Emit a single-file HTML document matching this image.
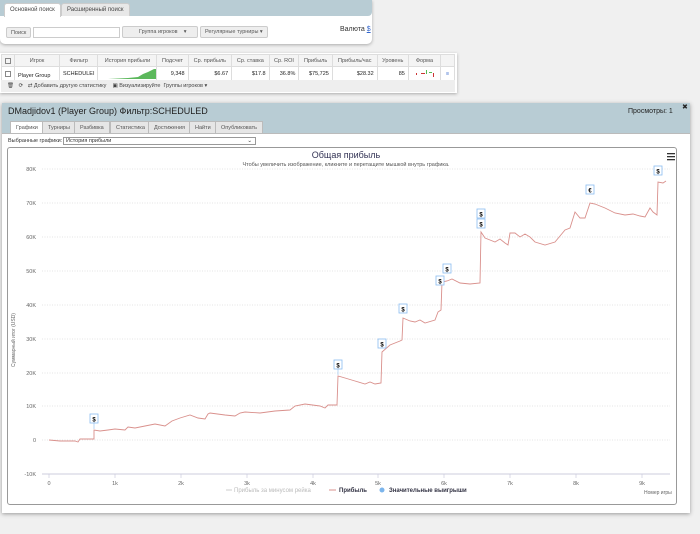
<!DOCTYPE html>
<html><head><meta charset="utf-8"><style>
*{box-sizing:border-box;margin:0;padding:0}
body{width:700px;height:534px;background:#f0f0f0;font-family:"Liberation Sans","DejaVu Sans",sans-serif;position:relative;overflow:hidden;font-size:6px;color:#333}
.abs{position:absolute}
.tab{position:absolute;top:3px;height:13px;border:1px solid #ccc;border-bottom:none;background:#e8e8e8;font-size:6px;padding:3px 5px;color:#444;border-radius:3px 3px 0 0}
.btn{position:absolute;height:11px;border:1px solid #ccc;background:#eee;font-size:5.5px;color:#555;padding:2px 4px;border-radius:2px}
table{border-collapse:collapse}
td{border:1px solid #ddd;font-size:5.5px;height:12px;padding:0 3px;white-space:nowrap}
.h td{background:#f4f4f4;color:#555;text-align:center}
.r td{text-align:right;color:#222}
.t2{position:absolute;top:121px;height:12px;border:1px solid #bbb;border-bottom:none;background:#e6e6e6;font-size:5.5px;padding:3px 5px;color:#555}
</style></head><body>
<!-- search panel -->
<div class="abs" style="left:0;top:0;width:372px;height:44px;background:#fff;border-radius:0 0 5px 5px;box-shadow:0 1px 3px #aaa"></div>
<div class="abs" style="left:0;top:0;width:372px;height:16px;background:#b8ccd4;border-radius:0 0 4px 0"></div>
<div class="tab" style="left:4px;background:#fff;height:14px">Основной поиск</div>
<div class="tab" style="left:61px">Расширенный поиск</div>
<div class="btn" style="left:6px;top:27px">Поиск</div>
<div class="abs" style="left:33px;top:27px;width:87px;height:11px;border:1px solid #ccc;background:#fff"></div>
<div class="btn" style="left:122px;top:26px;width:76px;height:12px;padding-left:16px">Группа игроков &nbsp;&nbsp;&nbsp;▾</div>
<div class="btn" style="left:200px;top:26px;height:12px">Регулярные турниры ▾</div>
<div class="abs" style="left:340px;top:26px;font-size:7px;color:#333">Валюта <span style="color:#36c;text-decoration:underline">$</span></div>
<!-- stats table -->
<div class="abs" style="left:0;top:53px;width:457px;height:40px;background:#fff;box-shadow:0 1px 3px #aaa"></div>
<table class="abs" style="left:1px;top:54px;width:454px">
<tr class="h"><td style="width:8px"><div style="width:6px;height:6px;border:1px solid #888"></div></td><td style="width:45px">Игрок</td><td style="width:32px">Фильтр</td><td style="width:58px">История прибыли</td><td>Подсчет</td><td>Ср. прибыль</td><td>Ср. ставка</td><td>Ср. ROI</td><td>Прибыль</td><td>Прибыль/час</td><td>Уровень</td><td>Форма</td><td style="width:14px"></td></tr>
<tr class="r"><td><div style="width:6px;height:6px;border:1px solid #888"></div></td><td style="text-align:left;padding-top:4px">Player Group</td><td style="text-align:left">SCHEDULEI</td><td style="padding:0"><svg width="58" height="12"><path d="M10 12 L30 11 L40 10 L45 7 L50 5 L56 2 L58 2 L58 12Z" fill="#5cb85c"/></svg></td><td>9,348</td><td>$6.67</td><td>$17.8</td><td>36.8%</td><td>$75,725</td><td>$28.32</td><td>85</td><td style="padding:0"><svg width="28" height="12"><rect x="4" y="6" width="1" height="2" fill="#c33"/><rect x="9" y="6" width="4" height="1" fill="#c33"/><rect x="14" y="3" width="1" height="4" fill="#5b5"/><rect x="17" y="5" width="3" height="1" fill="#5b5"/><rect x="21" y="6" width="1" height="4" fill="#c33"/></svg></td><td style="color:#36c;text-align:center">≡</td></tr>
</table>
<div class="abs" style="left:1px;top:80px;width:454px;height:12px;background:#eee;font-size:5.5px;color:#444;padding:3px 6px">🗑 &nbsp; ⟳ &nbsp; ⇄ Добавить другую статистику &nbsp;&nbsp; ▣ Визуализируйте &nbsp;Группы игроков ▾</div>
<!-- main panel -->
<div class="abs" style="left:2px;top:103px;width:688px;height:410px;background:#fff;box-shadow:0 1px 4px #999"></div>
<div class="abs" style="left:2px;top:103px;width:688px;height:30px;background:#b8ccd4"></div>
<div class="abs" style="left:8px;top:106px;font-size:9px;color:#222">DMadjidov1 (Player Group) Фильтр:SCHEDULED</div>
<div class="abs" style="left:628px;top:108px;font-size:7px;color:#222">Просмотры: 1</div>
<div class="abs" style="left:682px;top:103px;font-size:7px;color:#222">✖</div>
<div class="t2" style="left:10px;background:#fff;height:13px">Графики</div>
<div class="t2" style="left:42px">Турниры</div>
<div class="t2" style="left:74px">Разбивка</div>
<div class="t2" style="left:110px">Статистика</div>
<div class="t2" style="left:148px">Достижения</div>
<div class="t2" style="left:189px">Найти</div>
<div class="t2" style="left:215px">Опубликовать</div>
<div class="abs" style="left:2px;top:133px;width:688px;height:1px;background:#bbb"></div>
<div class="abs" style="left:8px;top:138px;font-size:5.5px;color:#333">Выбранные графики:</div>
<div class="abs" style="left:63px;top:137px;width:193px;height:8px;border:1px solid #999;font-size:5.5px;padding-left:2px;line-height:7px">История прибыли<span style="float:right;padding-right:3px">⌄</span></div>
<div class="abs" style="left:7px;top:147px;width:670px;height:358px;border:1px solid #999;border-radius:3px;background:#fff"></div>
<svg class="abs" style="left:0;top:0" width="700" height="534">
<text x="346" y="158" font-size="9" fill="#335" text-anchor="middle" font-family="Liberation Sans">Общая прибыль</text>
<text x="346" y="166" font-size="5.5" fill="#555" text-anchor="middle" font-family="Liberation Sans">Чтобы увеличить изображение, кликните и перетащите мышкой внутрь графика.</text>
<g fill="#333"><rect x="667" y="153" width="8" height="1.3"/><rect x="667" y="156" width="8" height="1.3"/><rect x="667" y="159" width="8" height="1.3"/></g>
<g stroke="#ddd" stroke-width="0.7" stroke-dasharray="1,1.5">
<line x1="42" x2="670" y1="169" y2="169"/><line x1="42" x2="670" y1="203" y2="203"/><line x1="42" x2="670" y1="237" y2="237"/><line x1="42" x2="670" y1="271" y2="271"/><line x1="42" x2="670" y1="305" y2="305"/><line x1="42" x2="670" y1="339" y2="339"/><line x1="42" x2="670" y1="373" y2="373"/><line x1="42" x2="670" y1="406" y2="406"/><line x1="42" x2="670" y1="440" y2="440"/></g>
<line x1="42" x2="670" y1="474" y2="474" stroke="#ccd" stroke-width="1"/>
<g font-size="5.5" fill="#666" text-anchor="end" font-family="Liberation Sans">
<text x="36" y="171">80K</text><text x="36" y="205">70K</text><text x="36" y="239">60K</text><text x="36" y="273">50K</text><text x="36" y="307">40K</text><text x="36" y="341">30K</text><text x="36" y="375">20K</text><text x="36" y="408">10K</text><text x="36" y="442">0</text><text x="36" y="476">-10K</text></g>
<g font-size="5.5" fill="#666" text-anchor="middle" font-family="Liberation Sans">
<text x="49" y="485">0</text><text x="115" y="485">1k</text><text x="181" y="485">2k</text><text x="247" y="485">3k</text><text x="313" y="485">4k</text><text x="378" y="485">5k</text><text x="444" y="485">6k</text><text x="510" y="485">7k</text><text x="576" y="485">8k</text><text x="642" y="485">9k</text></g>
<g stroke="#ccd" stroke-width="0.7"><line x1="49" x2="49" y1="474" y2="478"/><line x1="115" x2="115" y1="474" y2="478"/><line x1="181" x2="181" y1="474" y2="478"/><line x1="247" x2="247" y1="474" y2="478"/><line x1="313" x2="313" y1="474" y2="478"/><line x1="378" x2="378" y1="474" y2="478"/><line x1="444" x2="444" y1="474" y2="478"/><line x1="510" x2="510" y1="474" y2="478"/><line x1="576" x2="576" y1="474" y2="478"/><line x1="642" x2="642" y1="474" y2="478"/></g>
<text x="15" y="340" font-size="5" fill="#666" transform="rotate(-90 15 340)" text-anchor="middle" font-family="Liberation Sans">Суммарный итог (USD)</text>
<polyline fill="none" stroke="#d9908c" stroke-width="0.9" points="49,440 60,441 75,441 78,442 80,439 92,439 94,439 94,430 100,431 108,430 115,429 125,430 128,427 135,428 145,426 155,424 165,426 172,421 180,418 190,415 198,418 205,419 208,414 210,413 225,415 235,416 240,413 245,412 260,413 275,411 290,410 295,406 305,404 320,406 325,408 328,405 337,405 338,376 345,378 355,381 365,384 370,382 375,384 381,383 382,352 390,345 400,341 402,340 403,318 410,321 415,322 420,320 425,323 435,320 438,312 441,310 442,282 447,281 452,279 460,283 470,284 480,283 481,232 485,238 490,240 495,242 500,239 505,243 508,245 510,233 515,233 520,237 525,234 530,237 535,242 545,245 555,242 560,236 565,230 570,228 575,212 580,218 585,218 590,203 595,204 605,208 615,213 625,215 633,214 640,216 645,217 650,208 653,212 657,215 658,182 663,183 666,181"/>
<g font-size="6" font-weight="bold" text-anchor="middle" font-family="Liberation Sans" fill="#000">
<g transform="translate(94,420)"><rect x="-4" y="-6" width="8" height="9" fill="#fff" stroke="#8bbcf0" stroke-width="0.8"/><line x1="0" y1="3" x2="0" y2="9" stroke="#8bbcf0" stroke-width="0.6"/><text y="1.5">$</text></g>
<g transform="translate(338,366)"><rect x="-4" y="-6" width="8" height="9" fill="#fff" stroke="#8bbcf0" stroke-width="0.8"/><line x1="0" y1="3" x2="0" y2="9" stroke="#8bbcf0" stroke-width="0.6"/><text y="1.5">$</text></g>
<g transform="translate(382,345)"><rect x="-4" y="-6" width="8" height="9" fill="#fff" stroke="#8bbcf0" stroke-width="0.8"/><text y="1.5">$</text></g>
<g transform="translate(403,310)"><rect x="-4" y="-6" width="8" height="9" fill="#fff" stroke="#8bbcf0" stroke-width="0.8"/><text y="1.5">$</text></g>
<g transform="translate(440,282)"><rect x="-4" y="-6" width="8" height="9" fill="#fff" stroke="#8bbcf0" stroke-width="0.8"/><text y="1.5">$</text></g>
<g transform="translate(447,270)"><rect x="-4" y="-6" width="8" height="9" fill="#fff" stroke="#8bbcf0" stroke-width="0.8"/><text y="1.5">$</text></g>
<g transform="translate(481,215)"><rect x="-4" y="-6" width="8" height="9" fill="#fff" stroke="#8bbcf0" stroke-width="0.8"/><text y="1.5">$</text></g>
<g transform="translate(481,222)"><rect x="-4" y="-3" width="8" height="9" fill="#fff" stroke="#8bbcf0" stroke-width="0.8"/><text y="4.5">$</text></g>
<g transform="translate(590,191)"><rect x="-4" y="-6" width="8" height="9" fill="#fff" stroke="#8bbcf0" stroke-width="0.8"/><text y="1.5">€</text></g>
<g transform="translate(658,172)"><rect x="-4" y="-6" width="8" height="9" fill="#fff" stroke="#8bbcf0" stroke-width="0.8"/><text y="1.5">$</text></g>
</g>
<g font-size="6" font-family="Liberation Sans">
<line x1="226" x2="232" y1="490" y2="490" stroke="#ccc"/><text x="234" y="492" fill="#bbb">Прибыль за минусом рейка</text>
<line x1="329" x2="336" y1="490" y2="490" stroke="#d9908c"/><text x="339" y="492" fill="#334" font-weight="bold">Прибыль</text>
<circle cx="382" cy="490" r="2.5" fill="#7cb5ec"/><text x="389" y="492" fill="#334" font-weight="bold">Значительные выигрыши</text>
<text x="644" y="494" font-size="5" fill="#666">Номер игры</text></g>
</svg>
</body></html>
